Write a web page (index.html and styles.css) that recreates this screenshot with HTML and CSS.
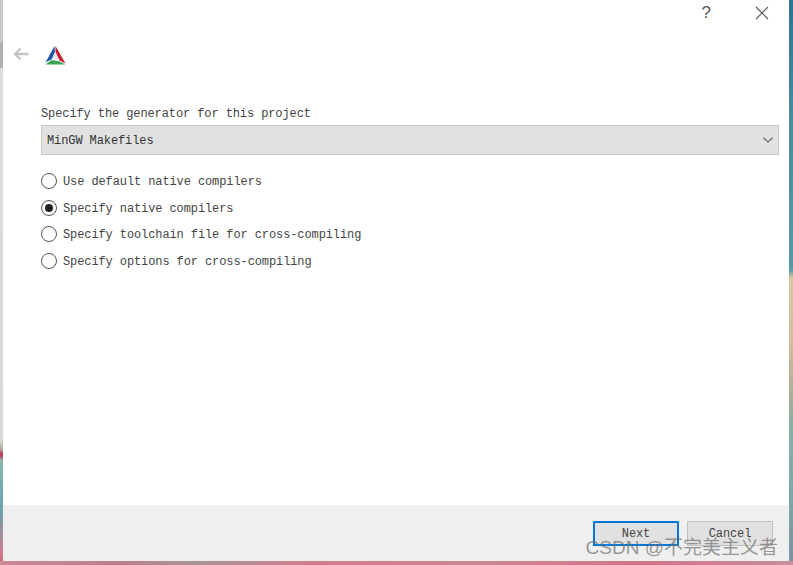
FILE: index.html
```html
<!DOCTYPE html>
<html lang="en">
<head>
    <meta charset="UTF-8">
    <meta name="viewport" content="width=device-width, initial-scale=1.0">
    <title>CMake Setup</title>
    <link rel="stylesheet" href="styles.css">
</head>
<body>
    <div class="desktop">
        <div class="strip-left"></div>
        <div class="window">
            <div class="titlebar">
                <span class="btn-help">?</span>
                <svg class="btn-close" width="14" height="14" viewBox="0 0 14 14">
                    <path d="M1 1 L13 13 M13 1 L1 13" stroke="#555" stroke-width="1.1" fill="none"/>
                </svg>
            </div>
            <div class="header">
                <svg class="back" width="16" height="14" viewBox="0 0 16 14">
                    <path d="M15.5 7 H2 M7.5 1.5 L2 7 L7.5 12.5" stroke="#c4c4c4" stroke-width="2.4" fill="none"/>
                </svg>
                <svg class="logo" width="21" height="19" viewBox="0 0 21 19">
                    <path d="M9.5 0 L0.5 16.5 L7 13 L10 6 Z" fill="#1f56a8"/>
                    <path d="M10.5 0 L20.5 17.5 L14.5 14.5 L10.5 6 Z" fill="#c8202f"/>
                    <path d="M10.2 6 L7 13 L14.5 14.5 Z" fill="#e4e8ee"/>
                    <path d="M0.5 18.5 L6.5 14 L14 15.2 L20.5 18.5 Z" fill="#3aa655"/>
                </svg>
            </div>
            <div class="content">
                <div class="label">Specify the generator for this project</div>
                <div class="combo">
                    <span class="combo-text">MinGW Makefiles</span>
                    <svg width="10" height="6" viewBox="0 0 10 6">
                        <path d="M0.5 0.7 L5 5 L9.5 0.7" stroke="#666" stroke-width="1.2" fill="none"/>
                    </svg>
                </div>
                <div class="options">
                    <div class="option"><span class="radio"></span>Use default native compilers</div>
                    <div class="option"><span class="radio checked"></span>Specify native compilers</div>
                    <div class="option"><span class="radio"></span>Specify toolchain file for cross-compiling</div>
                    <div class="option"><span class="radio"></span>Specify options for cross-compiling</div>
                </div>
            </div>
            <div class="footer">
                <button class="btn btn-next">Next</button>
                <button class="btn">Cancel</button>
            </div>
            <div class="watermark">CSDN @不完美主义者</div>
        </div>
        <div class="strip-right"></div>
    </div>
    <div class="strip-bottom"></div>
</body>
</html>
```

FILE: styles.css
```css
html, body {
    height: 100%;
}

body {
    margin: 0;
    display: flex;
    flex-direction: column;
    overflow: hidden;
    font-family: "Liberation Mono", monospace;
    font-size: 12px;
    letter-spacing: -0.1px;
    color: #444;
}

.desktop {
    flex: 1;
    display: flex;
    min-height: 0;
}

.strip-left {
    width: 3px;
    background: linear-gradient(to bottom,
        #c8c8c8 0, #c8c8c8 42px, #b0b0b0 42px, #b0b0b0 68px, #dcdcdc 68px,
        #d8d8d8 440px, #a8a890 450px, #c04060 453px, #c04060 456px,
        #88b8b0 460px, #6aa0ac 510px, #c88090 550px, #d06880 561px);
}

.strip-right {
    width: 4px;
    background: linear-gradient(to bottom,
        #2d7396 0, #4a8ba0 120px, #5a98a6 270px, #d8c8a0 278px,
        #d8bc9c 340px, #a8ac98 400px, #88b0a8 425px, #7aa8a8 500px, #8090a0 561px);
}

.strip-bottom {
    height: 4px;
    background: linear-gradient(to right,
        #c98a96 0, #b8808c 120px, #a89498 200px, #d07c8c 320px,
        #c98a96 480px, #d0748a 640px, #c4909c 793px);
}

.window {
    flex: 1;
    position: relative;
    display: flex;
    flex-direction: column;
    background: #fff;
}

.titlebar {
    height: 26px;
    display: flex;
    justify-content: flex-end;
    align-items: center;
    gap: 44px;
    padding-right: 20px;
}

.btn-help {
    font-family: "Liberation Sans", sans-serif;
    font-size: 17px;
    letter-spacing: 0;
    color: #555;
}

.header {
    height: 58px;
    display: flex;
    align-items: center;
    gap: 16px;
    padding-left: 10px;
}

.back {
    margin-bottom: 2px;
}

.content {
    flex: 1;
    padding: 23px 10px 0 38px;
}

.label {
    height: 18px;
}

.combo {
    height: 30px;
    box-sizing: border-box;
    display: flex;
    align-items: center;
    justify-content: space-between;
    padding: 0 5px;
    background: #e1e1e1;
    border: 1px solid #c8c8c8;
}

.combo-text {
    padding-top: 1px;
    color: #333;
}

.options {
    margin-top: 13.6px;
}

.option {
    height: 26.7px;
    display: flex;
    align-items: center;
    gap: 6px;
}

.radio {
    width: 16px;
    height: 16px;
    margin-bottom: 2px;
    box-sizing: border-box;
    display: flex;
    align-items: center;
    justify-content: center;
    border: 1px solid #555;
    border-radius: 50%;
}

.radio.checked::after {
    content: "";
    width: 8px;
    height: 8px;
    border-radius: 50%;
    background: #222;
}

.footer {
    height: 56px;
    box-sizing: border-box;
    display: flex;
    justify-content: flex-end;
    gap: 8px;
    padding: 16px 16px 0 0;
    background: #efefef;
}

.btn {
    width: 86px;
    height: 25px;
    padding: 0;
    background: #e1e1e1;
    border: 1px solid #c0c0c0;
    font: inherit;
    letter-spacing: inherit;
    color: #444;
}

.btn-next {
    border: 2px solid #0078d7;
}

/* site watermark sits on top of the dialog */
.watermark {
    position: absolute;
    right: 11px;
    bottom: 2px;
    font-family: "Liberation Sans", "Noto Sans CJK SC", sans-serif;
    font-size: 19px;
    letter-spacing: 0;
    white-space: nowrap;
    color: rgba(110, 110, 110, 0.7);
}
```
